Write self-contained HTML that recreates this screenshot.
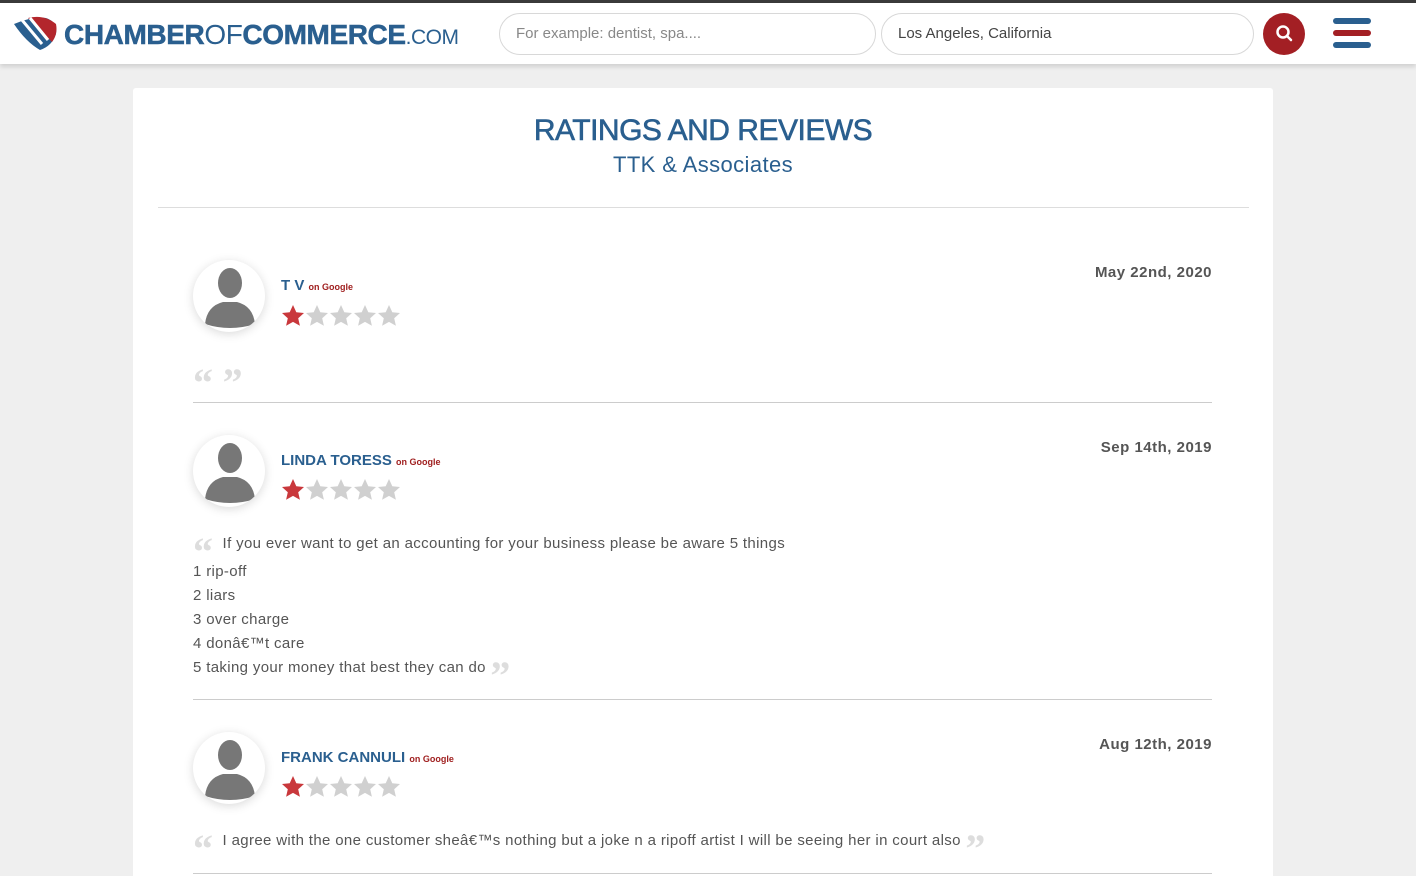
<!DOCTYPE html>
<html><head><meta charset="utf-8"><style>
*{margin:0;padding:0;box-sizing:border-box}
body{width:1416px;height:876px;overflow:hidden;background:#efefef;font-family:"Liberation Sans",sans-serif;position:relative}
.top{position:absolute;left:0;top:0;width:1416px;height:3px;background:#3a3a3a}
.hdr{position:absolute;left:0;top:3px;width:1416px;height:61px;background:#fff;box-shadow:0 3px 4px rgba(0,0,0,.12)}
.inp{position:absolute;top:10px;height:42px;border:1px solid #d8d8d8;border-radius:21px;font-size:15px;padding:11px 16px;color:#888}
.card{position:absolute;left:133px;top:88px;width:1140px;height:788px;background:#fff;border-radius:3px 3px 0 0}
h1{position:absolute;top:26px;width:100%;text-align:center;color:#2a5f8f;font-size:30px;font-weight:normal;letter-spacing:-0.5px;-webkit-text-stroke:.6px #2a5f8f}
h2{position:absolute;top:64px;width:100%;text-align:center;color:#2a5f8f;font-size:22px;font-weight:normal;letter-spacing:.4px}
.hr{position:absolute;left:25px;width:1091px;height:1px;background:#ddd}
.av{position:absolute;width:72px;height:72px;border-radius:50%;background:#fff;box-shadow:0 2px 10px rgba(0,0,0,.15);overflow:hidden}
.nm{position:absolute;color:#2a5f8f;font-size:15px;font-weight:bold}
.nm small{color:#a02020;font-size:9px;font-weight:bold}
.dt{position:absolute;right:61px;color:#555;font-size:15px;font-weight:bold;letter-spacing:.5px}
.st{position:absolute}
.tx{position:absolute;left:60px;color:#555;font-size:15px;line-height:24px;letter-spacing:.35px}
.q{color:#ddd;font-size:40px;font-family:"Liberation Serif",serif;font-weight:bold;vertical-align:-17px;line-height:10px;letter-spacing:-4px}
.sep{position:absolute;left:60px;width:1019px;height:1px;background:#ccc}
</style></head><body>
<svg width="0" height="0" style="position:absolute"><defs><path id="s" d="M12 1l3.3 7.2 7.7.8-5.8 5.2 1.7 7.6L12 17.9 5.1 21.8l1.7-7.6L1 9l7.7-.8z"/></defs></svg>
<div class="top"></div>
<div class="hdr">
<svg style="position:absolute;left:12px;top:11px" width="48" height="38" viewBox="0 0 48 38"><path d="M2 10 Q20 2 34 4 Q46 8 44 20 Q40 32 28 36 Q14 28 2 10Z" fill="#2a5f8f"/><path d="M16 4 Q32 0 44 10 Q46 20 40 28 Z" fill="#b3262c"/><path d="M10 6 L30 30 M18 4 L36 26" stroke="#fff" stroke-width="3"/></svg>
<div style="position:absolute;left:64px;top:16px;font-size:28px;font-weight:bold;color:#2a5f8f;letter-spacing:-0.4px;-webkit-text-stroke:.5px #2a5f8f">CHAMBER<span style="font-weight:normal;-webkit-text-stroke:0">OF</span>COMMERCE<span style="font-weight:normal;font-size:21px;-webkit-text-stroke:0;letter-spacing:-.5px">.COM</span></div>
<div class="inp" style="left:499px;width:377px">For example: dentist, spa....</div>
<div class="inp" style="left:881px;width:373px;color:#444">Los Angeles, California</div>
<div style="position:absolute;left:1263px;top:10px;width:42px;height:42px;border-radius:50%;background:#a31f24"><svg width="42" height="42"><circle cx="20" cy="19" r="5.5" fill="none" stroke="#fff" stroke-width="2.5"/><path d="M24 23l4 4" stroke="#fff" stroke-width="2.5" stroke-linecap="round"/></svg></div>
<div style="position:absolute;left:1333px;top:15px;width:38px;height:6px;border-radius:3px;background:#2a5f8f"></div>
<div style="position:absolute;left:1333px;top:27px;width:38px;height:6px;border-radius:3px;background:#a31f24"></div>
<div style="position:absolute;left:1333px;top:39px;width:38px;height:6px;border-radius:3px;background:#2a5f8f"></div>
</div>
<div class="card">
<h1>RATINGS AND REVIEWS</h1>
<h2>TTK &amp; Associates</h2>
<div class="hr" style="top:119px"></div>

<div class="av" style="left:60px;top:172px"><svg width="72" height="72"><ellipse cx="37" cy="23" rx="12" ry="15" fill="#777"/><path d="M12 64 Q14 46 30 42 L44 42 Q60 46 62 64 Q37 72 12 64Z" fill="#777"/></svg></div>
<div class="nm" style="left:148px;top:189px">T V <small>on Google</small></div>
<svg class="st" style="left:148px;top:216px" width="122" height="24"><use href="#s" fill="#c9383c"/><use href="#s" x="24" fill="#d0d0d0"/><use href="#s" x="48" fill="#d0d0d0"/><use href="#s" x="72" fill="#d0d0d0"/><use href="#s" x="96" fill="#d0d0d0"/></svg>
<div class="dt" style="top:176px">May 22nd, 2020</div>
<div class="tx" style="top:275px"><span class="q">“</span> &nbsp; <span class="q">”</span></div>
<div class="sep" style="top:314px"></div>

<div class="av" style="left:60px;top:347px"><svg width="72" height="72"><ellipse cx="37" cy="23" rx="12" ry="15" fill="#777"/><path d="M12 64 Q14 46 30 42 L44 42 Q60 46 62 64 Q37 72 12 64Z" fill="#777"/></svg></div>
<div class="nm" style="left:148px;top:364px">LINDA TORESS <small>on Google</small></div>
<svg class="st" style="left:148px;top:390px" width="122" height="24"><use href="#s" fill="#c9383c"/><use href="#s" x="24" fill="#d0d0d0"/><use href="#s" x="48" fill="#d0d0d0"/><use href="#s" x="72" fill="#d0d0d0"/><use href="#s" x="96" fill="#d0d0d0"/></svg>
<div class="dt" style="top:351px">Sep 14th, 2019</div>
<div class="tx" style="top:444px"><span class="q">“</span> &nbsp;&nbsp;If you ever want to get an accounting for your business please be aware 5 things</div>
<div class="tx" style="top:472px">1 rip-off<br>2 liars<br>3 over charge<br>4 donâ€™t care<br>5 taking your money that best they can do <span class="q">”</span></div>
<div class="sep" style="top:611px"></div>

<div class="av" style="left:60px;top:644px"><svg width="72" height="72"><ellipse cx="37" cy="23" rx="12" ry="15" fill="#777"/><path d="M12 64 Q14 46 30 42 L44 42 Q60 46 62 64 Q37 72 12 64Z" fill="#777"/></svg></div>
<div class="nm" style="left:148px;top:661px">FRANK CANNULI <small>on Google</small></div>
<svg class="st" style="left:148px;top:687px" width="122" height="24"><use href="#s" fill="#c9383c"/><use href="#s" x="24" fill="#d0d0d0"/><use href="#s" x="48" fill="#d0d0d0"/><use href="#s" x="72" fill="#d0d0d0"/><use href="#s" x="96" fill="#d0d0d0"/></svg>
<div class="dt" style="top:648px">Aug 12th, 2019</div>
<div class="tx" style="top:741px"><span class="q">“</span> &nbsp;&nbsp;I agree with the one customer sheâ€™s nothing but a joke n a ripoff artist I will be seeing her in court also <span class="q">”</span></div>
<div class="sep" style="top:785px"></div>
</div>
</body></html>
